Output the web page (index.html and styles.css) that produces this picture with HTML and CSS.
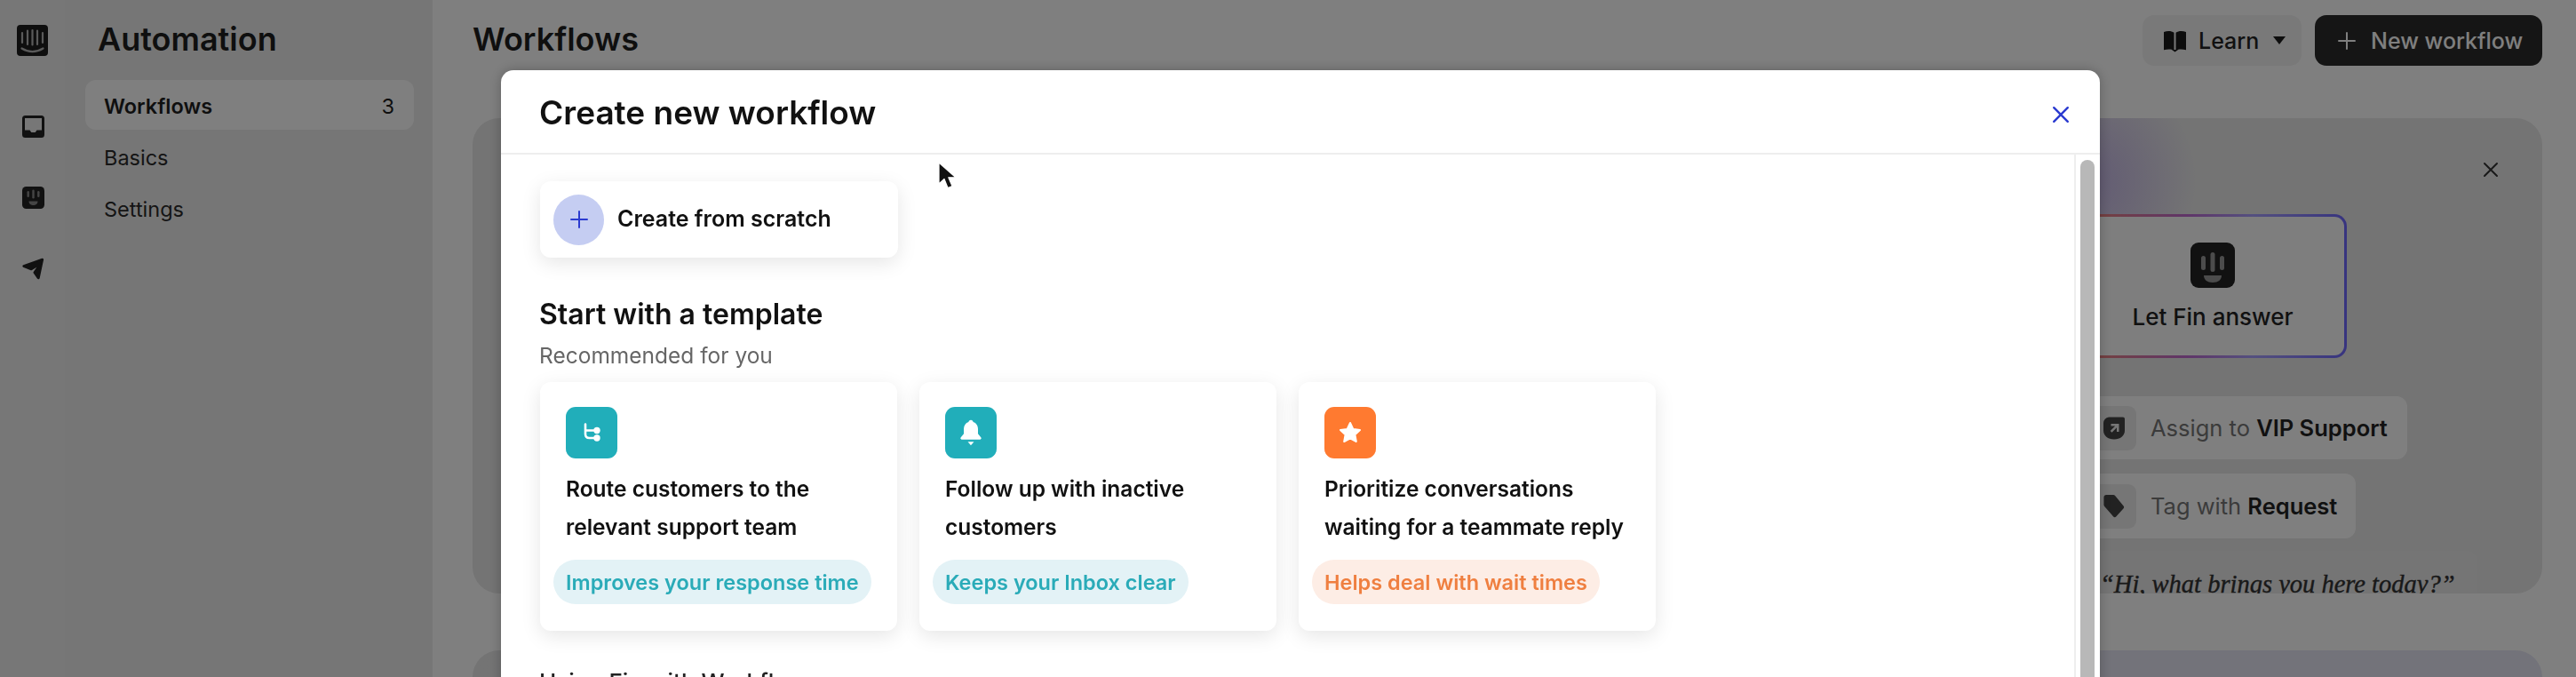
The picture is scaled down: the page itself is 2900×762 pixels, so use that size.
FILE: index.html
```html
<!DOCTYPE html>
<html lang="en">
<head>
<meta charset="utf-8">
<title>Workflows</title>
<link rel="stylesheet" href="styles.css">
</head>
<body>
<div class="app">
  <nav class="rail">
    <svg class="logo" viewBox="0 0 35 35"><rect width="35" height="35" rx="4" fill="#1c1c1c"/><g stroke="#f0f0f0" stroke-width="2.2" stroke-linecap="round" fill="none" opacity=".72"><path d="M6 9v11M12 6.500v15.500M17.500 6v16.500M23 6.500v15.500M29 9v11"/><path d="M5.500 26.500c7.500 4.500 16.500 4.500 24 0"/></g></svg>
    <svg class="rail-icon first" viewBox="0 0 25 25"><path fill="#222" fill-rule="evenodd" d="M3.500 0h18A3.500 3.500 0 0 1 25 3.500v18a3.500 3.500 0 0 1-3.500 3.500h-18A3.500 3.500 0 0 1 0 21.500v-18A3.500 3.500 0 0 1 3.500 0zM3 3v13.500h5.500l1.800 2.500h4.400l1.800-2.500H22V3z"/></svg>
    <svg class="rail-icon" viewBox="0 0 25 25"><rect width="25" height="25" rx="4.500" fill="#222"/><g fill="#8a8a8a"><rect x="5.500" y="5" width="2.400" height="7" rx="1.200"/><rect x="11.300" y="3.500" width="2.400" height="10" rx="1.200"/><rect x="17.100" y="5" width="2.400" height="7" rx="1.200"/><path d="M7.500 16.500h10c0 3-2.300 4.500-5 4.500s-5-1.500-5-4.500z"/></g></svg>
    <svg class="rail-icon" viewBox="0 0 25 25"><path fill="#222" d="M1.200 8.300 22.300.800c1.100-.4 2 .5 1.800 1.500L19.700 23c-.3 1.400-2 1.700-2.800.6l-4.300-6.400c-.3-.4-.2-.9.100-1.300l3.600-5.200-5.300 3.400c-.4.300-.9.300-1.300.1L1 10.700C0 10.100.1 8.700 1.200 8.300z"/></svg>
  </nav>
  <aside class="sidebar">
    <h2 class="side-title">Automation</h2>
    <ul class="side-list">
      <li class="side-item active"><span>Workflows</span><span class="count">3</span></li>
      <li class="side-item">Basics</li>
      <li class="side-item">Settings</li>
    </ul>
  </aside>
  <main class="main">
    <header class="topbar">
      <h1 class="page-title">Workflows</h1>
      <div class="actions">
        <button class="btn btn-learn">
          <svg class="book" viewBox="0 0 27 27"><path fill="#1a1a1a" d="M1 4c4-1.500 8.500-1.500 11.500.8v20C9.500 23 5 23 1 24.300zM26 4c-4-1.500-8.500-1.500-11.500.8v20c3-1.800 7.500-1.800 11.500-.5z"/><path fill="#1a1a1a" d="M10 24h7l-3.500 2.600z"/></svg>
          <span>Learn</span>
          <svg class="caret" viewBox="0 0 16 11"><path fill="#1a1a1a" d="M1 1h14L8 10z"/></svg>
        </button>
        <button class="btn btn-new">
          <svg class="plus-w" viewBox="0 0 20 20"><path stroke="#fff" stroke-width="2" stroke-linecap="round" d="M10 1v18M1 10h18"/></svg>
          <span>New workflow</span>
        </button>
      </div>
    </header>
    <section class="hero">
      <svg class="hero-x" viewBox="0 0 18 18"><path stroke="#333" stroke-width="2" stroke-linecap="round" d="M2 2l14 14M16 2 2 16"/></svg>
      <div class="hero-col">
        <div class="fin-card">
          <svg class="fin-icon" viewBox="0 0 50 51"><rect width="50" height="51" rx="9" fill="#222"/><g fill="#999"><rect x="12" y="15" width="5" height="16" rx="2.500"/><rect x="22.500" y="11" width="5" height="22" rx="2.500"/><rect x="33" y="15" width="5" height="16" rx="2.500"/><path d="M15 37h20c0 5-4 8-10 8s-10-3-10-8z"/></g></svg>
          <span class="fin-label">Let Fin answer</span>
        </div>
        <div class="step step-one">
          <span class="tile"><svg viewBox="0 0 24 26"><path fill="#444" fill-rule="evenodd" d="M6 1h16a2 2 0 0 1 2 2v13c0 6-5 10-12 10S0 22 0 16V8a7 7 0 0 1 6-7zm2.500 7.500v2.500h4.700l-5.500 5.500 1.800 1.800 5.500-5.500V17.500h2.500v-9z"/></svg></span>
          <span class="step-text">Assign to <b>VIP Support</b></span>
        </div>
        <div class="step step-two">
          <span class="tile"><svg viewBox="0 0 24 28"><path fill="#444" d="M3 1h8c.8 0 1.500.3 2 .9l10 12c.8 1 .7 2.300-.2 3.100l-8.500 9.500c-.9.900-2.300.900-3.100-.1L1 14.800C.4 14.200 0 13.500 0 12.700V4a3 3 0 0 1 3-3z"/></svg></span>
          <span class="step-text">Tag with <b>Request</b></span>
        </div>
        <div class="quote">“Hi, what brings you here today?”</div>
      </div>
    </section>
    <section class="hero-two"></section>
  </main>
</div>
<div class="backdrop"></div>
<div class="modal">
  <header class="modal-head">
    <h2 class="modal-title">Create new workflow</h2>
    <svg class="modal-x" viewBox="0 0 18 18"><path stroke="#2b3bd0" stroke-width="2.200" stroke-linecap="round" d="M2 2l14 14M16 2 2 16"/></svg>
  </header>
  <div class="modal-body">
    <div class="modal-content">
      <div class="scratch">
        <span class="scratch-plus"><svg viewBox="0 0 20 20"><path stroke="#2b3bd0" stroke-width="2" stroke-linecap="round" d="M10 1v18M1 10h18"/></svg></span>
        <span class="scratch-label">Create from scratch</span>
      </div>
      <h3 class="section-title">Start with a template</h3>
      <p class="section-sub">Recommended for you</p>
      <div class="templates">
        <article class="tpl">
          <span class="tpl-icon teal"><svg viewBox="0 0 28 28"><path fill="none" stroke="#fff" stroke-width="2.600" stroke-linecap="round" d="M7 4.500v11c0 3 1.500 4.500 4.500 4.500H17M7 11.500h10"/><circle cx="20" cy="11.500" r="3.700" fill="#fff"/><circle cx="20" cy="20" r="3.700" fill="#fff"/></svg></span>
          <h4 class="tpl-title">Route customers to the relevant support team</h4>
          <span class="tag tag-teal">Improves your response time</span>
        </article>
        <article class="tpl">
          <span class="tpl-icon teal"><svg class="bell" viewBox="0 0 28 28"><path fill="#fff" d="M14 1.500c1.300 0 2.200 1 2.300 2.100 3 .9 4.700 3.500 4.700 7v4.400l3 3.900c.6.800.1 1.800-.9 1.800H4.900c-1 0-1.500-1-.9-1.800l3-3.900v-4.400c0-3.500 1.700-6.100 4.700-7 .1-1.100 1-2.100 2.300-2.100z"/><path fill="#fff" d="M11 23h6l-3 3.500z"/></svg></span>
          <h4 class="tpl-title">Follow up with inactive customers</h4>
          <span class="tag tag-teal">Keeps your Inbox clear</span>
        </article>
        <article class="tpl">
          <span class="tpl-icon orange"><svg viewBox="0 0 28 28"><path fill="#fff" stroke="#fff" stroke-width="2" stroke-linejoin="round" d="M14 3l3.300 7 7.700 1-5.600 5.300 1.400 7.700-6.800-3.700L7.200 24l1.400-7.700L3 11l7.700-1z"/></svg></span>
          <h4 class="tpl-title">Prioritize conversations waiting for a teammate reply</h4>
          <span class="tag tag-orange">Helps deal with wait times</span>
        </article>
      </div>
      <h3 class="fin-heading">Using Fin with Workflows</h3>
    </div>
    <div class="scroll-track"><div class="scroll-thumb"></div></div>
  </div>
</div>
<svg class="cursor" viewBox="0 0 22 34"><path fill="#111" stroke="#fff" stroke-width="1.200" stroke-linejoin="round" d="M1 1v24l6-5.500 4 10 5-2-4.200-9.700H20z"/></svg>
</body>
</html>
```
FILE: styles.css
```css
* { box-sizing: border-box; margin: 0; padding: 0; }
html, body { height: 762px; overflow: hidden; }
body { font-family: Inter, "Liberation Sans", sans-serif; color: #222; background: #fff; }
button { font: inherit; border: 0; }
ul { list-style: none; }

.app { display: flex; height: 762px; overflow: hidden; }

.rail { width: 73px; flex: none; background: #efefef; display: flex; flex-direction: column; align-items: center; padding-top: 28px; }
.logo { width: 35px; height: 35px; }
.rail-icon { width: 25px; height: 25px; margin-bottom: 55px; margin-left: 1px; }
.rail-icon.first { margin-top: 67px; }

.sidebar { width: 414px; flex: none; background: #ededed; padding: 0 21px 0 23px; }
.side-title { font-size: 36px; font-weight: 600; line-height: 44px; color: #1f1f1f; margin: 22px 0 24px 14px; }
.side-item { display: flex; justify-content: space-between; align-items: center; height: 56px; margin-bottom: 2px; padding: 3px 22px 0 21px; font-size: 23.500px; color: #2a2a2a; border-radius: 12px; }
.side-item.active { background: #fff; font-weight: 600; color: #1f1f1f; }
.count { font-weight: 400; }

.main { flex: 1; min-width: 0; background: #fff; padding: 0 38px 0 45px; }
.topbar { display: flex; justify-content: space-between; align-items: flex-start; height: 133px; padding-top: 17px; }
.page-title { font-size: 36px; font-weight: 600; line-height: 54px; color: #1f1f1f; }
.actions { display: flex; gap: 15px; }
.btn { height: 57px; display: flex; align-items: center; border-radius: 13px; font-size: 25px; font-weight: 500; }
.btn-learn { width: 179px; background: #f3f3f3; color: #222; padding-left: 23px; }
.book { width: 27px; height: 27px; margin-right: 13px; }
.caret { width: 16px; height: 11px; margin-left: 15px; }
.btn-new { width: 256px; background: #2a2a2a; color: #fff; padding-left: 26px; }
.plus-w { width: 20px; height: 20px; margin-right: 17px; }

.hero { position: relative; height: 535px; border-radius: 30px; overflow: hidden; padding: 108px 0 0 1808px; background: radial-gradient(circle 130px at 1810px 70px, rgba(130, 90, 230, .38), rgba(130, 90, 230, 0)), #e8e8e8; }
.hero-x { position: absolute; top: 49px; right: 49px; width: 18px; height: 18px; }
.hero-col { display: flex; flex-direction: column; align-items: flex-start; }
.fin-card { width: 302px; height: 162px; border: 3px solid transparent; border-radius: 14px; background: linear-gradient(#fcfcfc, #fcfcfc) padding-box, linear-gradient(90deg, #f4876f 0%, #c06ad0 40%, #a8a0ff 65%, #6f68ff 100%) border-box; display: flex; flex-direction: column; align-items: center; padding-top: 29px; }
.fin-icon { width: 50px; height: 51px; }
.fin-label { margin-top: 17px; font-size: 26px; font-weight: 500; line-height: 32px; color: #222; }
.step { display: flex; align-items: center; margin-top: 16px; padding-left: 15px; border-radius: 12px; background: #fff; }
.step-one { width: 370px; height: 71px; margin-top: 43px; }
.step-two { width: 312px; height: 73px; }
.tile { width: 50px; height: 50px; flex: none; display: flex; align-items: center; justify-content: center; border-radius: 9px; background: #ededed; margin-right: 16px; }
.tile svg { width: 24px; height: 27px; }
.step-text { font-size: 25.500px; color: #777; white-space: nowrap; }
.step-text b { font-weight: 600; color: #222; }
.quote { margin-top: 14px; width: 449px; height: 76px; padding: 18px 0 0 24px; border-radius: 12px; background: #ebebeb; font-family: "Liberation Serif", serif; font-style: italic; font-size: 28.500px; line-height: 40px; color: #333; -webkit-text-stroke: .4px #333; white-space: nowrap; }
.hero-two { height: 200px; margin-top: 64px; border-radius: 30px; background: linear-gradient(90deg, #e8e8e8 0%, #e6e6f4 20%); }

.backdrop { position: fixed; inset: 0; background: rgba(0, 0, 0, .5); }

.modal { position: fixed; left: 564px; top: 79px; width: 1800px; height: 800px; background: #fff; border-radius: 14px 14px 0 0; box-shadow: 0 0 14px rgba(0, 0, 0, .25); display: flex; flex-direction: column; overflow: hidden; }
.modal-head { height: 95px; flex: none; display: flex; align-items: center; justify-content: space-between; padding: 0 34px 0 43px; border-bottom: 2px solid #eee; }
.modal-title { font-size: 37px; font-weight: 600; color: #111; line-height: 44px; margin-top: 2px; }
.modal-x { width: 20px; height: 20px; margin-top: 7px; }
.modal-body { flex: 1; display: flex; min-height: 0; }
.modal-content { flex: 1; min-width: 0; padding: 30px 0 0 44px; }
.scroll-track { width: 29px; flex: none; border-left: 2px solid #eee; padding: 6px 6px 0 5px; }
.scroll-thumb { height: 100%; border-radius: 8px 8px 0 0; background: #b8b8b8; }

.scratch { width: 403px; height: 86px; display: flex; align-items: center; padding-left: 15px; border-radius: 12px; background: #fff; box-shadow: 0 6px 22px rgba(0, 0, 0, .1); }
.scratch-plus { width: 57px; height: 57px; flex: none; display: flex; align-items: center; justify-content: center; border-radius: 50%; background: #c5cdf2; margin-right: 15px; }
.scratch-plus svg { width: 20px; height: 20px; }
.scratch-label { font-size: 25px; font-weight: 600; color: #111; margin-top: -2px; }

.section-title { margin: 44px 0 0 -1px; font-size: 32px; font-weight: 600; line-height: 40px; color: #111; }
.section-sub { margin: 10px 0 0 -1px; font-size: 24.500px; line-height: 32px; color: #666; }

.templates { display: flex; gap: 25px; margin-top: 14px; }
.tpl { width: 402px; height: 280px; flex: none; padding: 28px 0 0 29px; border-radius: 12px; background: #fff; box-shadow: 0 6px 22px rgba(0, 0, 0, .1); display: flex; flex-direction: column; align-items: flex-start; }
.tpl-icon { width: 58px; height: 58px; flex: none; display: flex; align-items: center; justify-content: center; border-radius: 11px; }
.tpl-icon svg { width: 28px; height: 28px; }
.tpl-icon svg.bell { width: 32px; height: 32px; }
.teal { background: #21aeba; }
.orange { background: #ff7a30; }
.tpl-title { margin-top: 13px; width: 350px; font-size: 24.500px; font-weight: 600; line-height: 43px; color: #111; }
.tag { margin: 15px 0 0 -14px; height: 50px; display: flex; align-items: center; padding: 0 14px; border-radius: 25px; font-size: 23.500px; font-weight: 600; white-space: nowrap; }
.tag-teal { background: #e3f2f6; color: #2aabb8; }
.tag-orange { background: #fdede5; color: #ef7f40; }

.fin-heading { margin: 38px 0 0 -1px; font-size: 26px; font-weight: 500; line-height: 40px; color: #222; }

.cursor { position: fixed; left: 1056px; top: 182px; width: 22px; height: 34px; }
```
